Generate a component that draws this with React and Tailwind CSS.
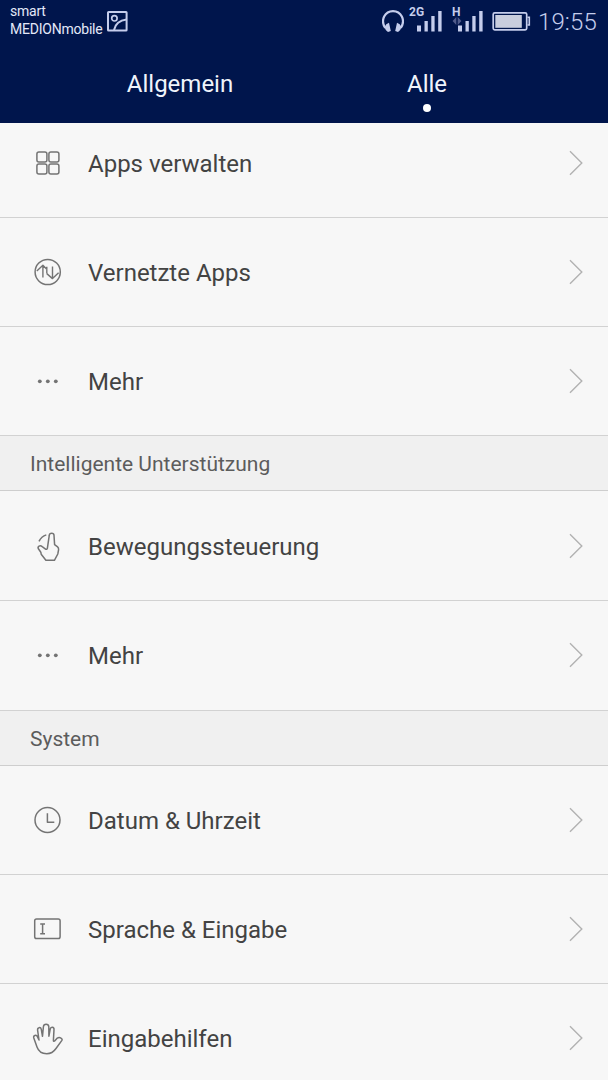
import { clsx } from "clsx";

const AppsIcon = () => (
  <>
    <rect x="4.9" y="4.9" width="10" height="10" rx="2" />
    <rect x="16.9" y="4.9" width="10" height="10" rx="2" />
    <rect x="4.9" y="16.9" width="10" height="10" rx="2" />
    <rect x="16.9" y="16.9" width="10" height="10" rx="2" />
  </>
);

const NetworkIcon = () => (
  <>
    <circle cx="15.7" cy="16" r="12.6" />
    <path
      d="M4.8 15 10.9 9.3 15 13.6M10.9 9.8V21.5M14.8 17.6 20.5 22.6 26.6 16.8M20.5 22V10.5M14.8 10.8V17.6"
      strokeWidth="1.4"
    />
  </>
);

const MoreIcon = () => (
  <g fill="#747474" stroke="none">
    <circle cx="7.8" cy="16.3" r="1.9" />
    <circle cx="15.8" cy="16.3" r="1.9" />
    <circle cx="23.8" cy="16.3" r="1.9" />
  </g>
);

const GestureIcon = () => (
  <>
    <path d="M17.3 5.2C17.5 2.6 21.9 2.6 22 5.2L22.6 14.6 25.6 16.8C26.6 17.6 26.7 18.4 26.6 19.6L25.8 24 22.4 30.3H13.9L9.2 24.2 8.8 22.2 6.4 18.8C5.2 16.4 8 14.8 10.2 16.6L13.2 18.8C14.2 19.5 15.1 19.3 15.4 18.2Z" />
    <path d="M7 11.4C8.6 8 11.2 5.8 14.3 4.9" />
  </>
);

const ClockIcon = () => (
  <>
    <circle cx="15.5" cy="16" r="12.5" />
    <path d="M15.4 9.2V18.2H22.3" />
  </>
);

const InputIcon = () => (
  <>
    <rect x="2.7" y="6" width="25.4" height="19.6" rx="1.8" />
    <path d="M8.2 10.9H13M8.2 20.8H13M10.6 10.9V20.8" />
  </>
);

const HandIcon = () => (
  <path d="M14.7 31.7C10 31.7 6.4 29 5 25L1.8 16C1 13.4 4.3 12.2 5.4 14.6L7 18 5.6 8.2C5.3 5.2 8.7 4.7 9.3 7.3L10.5 14.3 11.4 4.8C11.7 1.3 16.5 1.3 16.8 4.8L16.9 14.2 18.2 7.2C18.7 4.4 22.2 4.8 22 7.6L21.4 18.4C21.4 19.6 22.3 19.4 22.9 18.7L25.3 16.1C27.8 14.6 31 16.7 29.9 18.4L24 26.5C21.8 29.7 19 31.7 14.7 31.7Z" />
);

const Chevron = () => (
  <svg
    className="h-[26px] w-[14px] shrink-0"
    viewBox="0 0 14 26"
    fill="none"
    stroke="#b2b2b2"
    strokeWidth="1.4"
  >
    <path d="M1 1.2 12.8 13 1 24.8" />
  </svg>
);

const sections = [
  {
    items: [
      { label: "Apps verwalten", icon: AppsIcon },
      { label: "Vernetzte Apps", icon: NetworkIcon },
      { label: "Mehr", icon: MoreIcon },
    ],
  },
  {
    title: "Intelligente Unterstützung",
    items: [
      { label: "Bewegungssteuerung", icon: GestureIcon, size: "h-[110px]" },
      { label: "Mehr", icon: MoreIcon, size: "h-[110px] pb-[2px]" },
    ],
  },
  {
    title: "System",
    items: [
      { label: "Datum & Uhrzeit", icon: ClockIcon },
      { label: "Sprache & Eingabe", icon: InputIcon },
      { label: "Eingabehilfen", icon: HandIcon },
    ],
  },
];

const Signal = ({ label, labelClass, arrows, className }) => (
  <div className={clsx("relative h-[22px] w-[25px]", className)}>
    <svg className="h-[22px] w-[25px]" viewBox="0 0 25 22" fill="#c5cdec">
      <rect x="0" y="15.5" width="4" height="6" />
      <rect x="7.5" y="11" width="3.3" height="10.5" />
      <rect x="14.3" y="6" width="3.3" height="15.5" />
      <rect x="21.2" y="1" width="3.4" height="20.5" />
    </svg>
    <span
      className={clsx(
        "absolute -top-[5px] text-[12px] leading-[14px] font-bold text-[#c5cdec]",
        labelClass,
      )}
    >
      {label}
    </span>
    {arrows && (
      <svg
        className="absolute top-[7px] -left-[6px] h-[8px] w-[10px]"
        viewBox="0 0 10 9"
        fill="#505b8b"
      >
        <path d="M4.2 0V9L0 4.5ZM5.8 0V9L10 4.5Z" />
      </svg>
    )}
  </div>
);

const StatusBar = () => (
  <div className="flex h-[43px] items-start text-[#c5cdec]">
    <div className="w-[97px] pt-[2px] pl-[10px] text-[14px] leading-[18px] tracking-[-0.22px] text-[#e3e8f8]">
      <div>smart</div>
      <div>MEDIONmobile</div>
    </div>
    <svg
      className="mt-[11px] ml-[10px] h-[21px] w-[21px]"
      viewBox="0 0 21 21"
      fill="none"
      stroke="currentColor"
      strokeWidth="2"
    >
      <rect x="1" y="1" width="18.6" height="18.6" rx="0.6" />
      <circle cx="7.4" cy="7.3" r="2.7" strokeWidth="1.7" />
      <path d="M7 19C8.2 13.5 12.5 9.5 19.5 8.6" />
    </svg>
    <svg className="mt-[10px] ml-[254px] h-[23px] w-[22px]" viewBox="0 0 22 23">
      <path
        d="M3.2 18C-2 10 3 1.2 11 1.2S24 10 18.8 18"
        fill="none"
        stroke="currentColor"
        strokeWidth="2.2"
      />
      <path
        d="M4.3 14.2 7 12.7 8.8 21 6 22C4.3 21 3 19 2.6 17ZM17.7 14.2 15 12.7 13.2 21 16 22C17.7 21 19 19 19.4 17Z"
        fill="currentColor"
      />
    </svg>
    <Signal
      label="2G"
      labelClass="-left-[8px]"
      className="mt-[10px] ml-[13px]"
    />
    <Signal
      label="H"
      labelClass="-left-[6px]"
      arrows
      className="mt-[10px] ml-[16px]"
    />
    <svg className="mt-[11px] ml-[9px] h-[20px] w-[39px]" viewBox="0 0 39 20">
      <rect
        x="1.2"
        y="1.8"
        width="33.5"
        height="17"
        rx="1.5"
        fill="none"
        stroke="currentColor"
        strokeWidth="1.7"
      />
      <rect x="3.3" y="4" width="26.5" height="12.8" fill="#c9cede" />
      <path
        d="M35.5 6.3H37.3V14H35.5"
        fill="none"
        stroke="currentColor"
        strokeWidth="1.6"
      />
    </svg>
    <span className="mt-[8px] ml-[7px] text-[24px] leading-[28px] font-light tracking-[0.1px]">
      19:55
    </span>
  </div>
);

const Tabs = () => (
  <div className="flex h-[80px] justify-center pr-px text-[24px] leading-[28px] text-[#f0f4fb]">
    <div className="w-[247px] pt-[27px] text-center">Allgemein</div>
    <div className="flex w-[247px] flex-col items-center pt-[27px]">
      Alle
      <span className="mt-[6px] h-[8px] w-[8px] rounded-full bg-white" />
    </div>
  </div>
);

const Row = ({ label, icon: Icon, size = "h-[109px]" }) => (
  <div
    className={clsx(
      "flex shrink-0 items-center border-b border-[#d2d2d2] pr-[25px] pl-[32px]",
      size,
    )}
  >
    <svg
      className="h-[32px] w-[32px] shrink-0 overflow-visible"
      viewBox="0 0 32 32"
      fill="none"
      stroke="#747474"
      strokeWidth="1.5"
      strokeLinejoin="round"
    >
      <Icon />
    </svg>
    <span className="ml-[24px] flex-1 pt-[2px] text-[24px] leading-[28px] whitespace-nowrap text-[#434343]">
      {label}
    </span>
    <Chevron />
  </div>
);

const App = () => {
  return (
    <div className="flex h-[1080px] w-[608px] flex-col overflow-hidden bg-[#f7f7f7] font-['Roboto',sans-serif]">
      <header className="z-10 h-[123px] shrink-0 bg-[#00154c]">
        <StatusBar />
        <Tabs />
      </header>
      {/* list is scrolled a little, so the first row starts under the header */}
      <main className="-mt-[14px] flex flex-col">
        {sections.map((section, i) => (
          <section key={i} className="flex flex-col">
            {section.title && (
              <h2 className="flex h-[55px] items-center border-b border-[#cecece] bg-[#f0f0f0] pt-[2px] pl-[30px] text-[21px] leading-[24px] text-[#5c5c5c]">
                {section.title}
              </h2>
            )}
            {section.items.map((item) => (
              <Row key={item.label} {...item} />
            ))}
          </section>
        ))}
      </main>
    </div>
  );
};

export default App;
